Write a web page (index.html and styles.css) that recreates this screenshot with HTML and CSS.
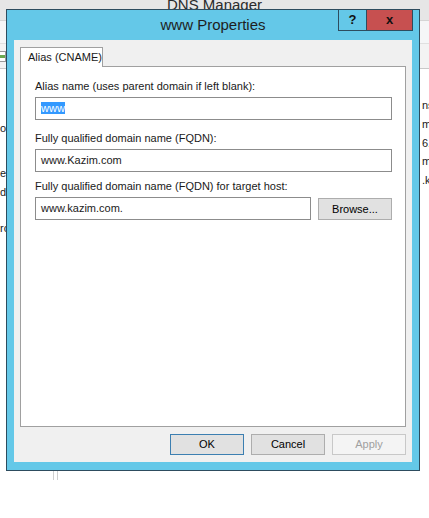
FILE: index.html
```html
<!DOCTYPE html>
<html>
<head>
  <title>www Properties</title>
  <link rel="stylesheet" href="styles.css">
</head>
<body>
<div class="desktop">
  <div class="app">
    <div class="app-title">DNS Manager</div>
    <div class="app-menu"></div>
    <div class="app-tools"><span class="tool-icon"></span></div>
    <div class="app-body">
      <ul class="tree">
        <li class="row-a">ord</li>
        <li class="row-b">er</li>
        <li class="row-c">d</li>
        <li class="row-d">rc</li>
      </ul>
      <ul class="records">
        <li>ns1.kazim.com.</li>
        <li>mail.kazim.com.</li>
        <li>6.0.0.1</li>
        <li>mail.kazim.com.</li>
        <li>.kazim.com.</li>
      </ul>
    </div>
  </div>

  <div class="dialog">
    <div class="dialog-title">www Properties</div>
    <div class="caption-buttons">
      <span class="cap-btn cap-help">?</span>
      <span class="cap-btn cap-close">x</span>
    </div>
    <div class="dialog-client">
      <div class="tabs">
        <span class="tab">Alias (CNAME)</span>
      </div>
      <div class="tab-panel">
        <div class="field">
          <label>Alias name (uses parent domain if left blank):</label>
          <div class="textbox"><span class="selected">www</span></div>
        </div>
        <div class="field">
          <label>Fully qualified domain name (FQDN):</label>
          <div class="textbox">www.Kazim.com</div>
        </div>
        <div class="field field-target">
          <label>Fully qualified domain name (FQDN) for target host:</label>
          <div class="field-row">
            <div class="textbox">www.kazim.com.</div>
            <span class="btn btn-browse">Browse...</span>
          </div>
        </div>
      </div>
      <div class="dialog-buttons">
        <span class="btn btn-default">OK</span>
        <span class="btn">Cancel</span>
        <span class="btn btn-disabled">Apply</span>
      </div>
    </div>
  </div>
</div>
</body>
</html>
```

FILE: styles.css
```css
body {
  margin: 0;
  background: #ffffff;
  font-family: "Liberation Sans", Arial, sans-serif;
  font-size: 11px;
  color: #1a1a1a;
}
ul {
  list-style: none;
  margin: 0;
  padding: 0;
}
.desktop {
  position: relative;
  width: 429px;
  height: 518px;
  overflow: hidden;
}

/* window behind the dialog */
.app-title {
  height: 20px;
  background: #e6e6e6;
  text-align: center;
  font-size: 15px;
  line-height: 10px;
  color: #2b2b2b;
  overflow: hidden;
}
.app-menu {
  height: 22px;
  background: #f5f6f7;
  border-top: 1px solid #d5d5d5;
}
.app-tools {
  height: 24px;
  background: #f3f3f3;
  border-top: 1px solid #e0e0e0;
  border-bottom: 1px solid #c9c9c9;
  display: flex;
  align-items: center;
}
.tool-icon {
  width: 5px;
  height: 9px;
  border: 1px solid #9a9a9a;
  border-left: 0;
  background: linear-gradient(#ffffff 0 3px, #6aa84f 3px 6px, #ffffff 6px);
}
.app-body {
  height: 411px;
  display: flex;
}
.tree {
  width: 53px;
  border-right: 1px solid #cfcfcf;
  white-space: nowrap;
  overflow: hidden;
}
.tree li {
  line-height: 18px;
}
.tree .row-a { margin-top: 50px; }
.tree .row-b { margin-top: 27px; }
.tree .row-c { margin-top: 1px; }
.tree .row-d { margin-top: 18px; }
.records {
  flex: 1;
  margin-left: 3px;
  border-left: 1px solid #cfcfcf;
  padding: 27px 0 0 364px;
  white-space: nowrap;
  overflow: hidden;
}
.records li {
  line-height: 18.75px;
}

/* the properties dialog */
.dialog {
  position: absolute;
  left: 6px;
  top: 9px;
  width: 398px;
  height: 452px;
  padding: 0 7px 8px;
  border: 1px solid #2d4c5e;
  background: #64c8e8;
  display: flex;
  flex-direction: column;
}
.dialog-title {
  height: 30px;
  line-height: 30px;
  text-align: center;
  font-size: 15px;
  color: #1e1e1e;
}
.caption-buttons {
  position: absolute;
  top: -1px;
  right: 6px;
  display: flex;
}
.cap-btn {
  height: 20px;
  line-height: 20px;
  border: 1px solid #2d4c5e;
  text-align: center;
  font-weight: bold;
  font-size: 13px;
  color: #111;
}
.cap-help {
  width: 27px;
  background: #64c8e8;
}
.cap-close {
  width: 45px;
  margin-left: -1px;
  background: #c75050;
}
.dialog-client {
  flex: 1;
  background: #f0f0f0;
  padding: 7px 6px 7px;
  display: flex;
  flex-direction: column;
}
.tabs {
  display: flex;
  height: 20px;
}
.tab {
  width: 83px;
  box-sizing: border-box;
  padding: 0 7px;
  border: 1px solid #a0a0a0;
  border-bottom: 0;
  background: #ffffff;
  line-height: 19px;
  white-space: nowrap;
  position: relative;
  z-index: 1;
}
.tab-panel {
  flex: 1;
  margin-top: -1px;
  border: 1px solid #a0a0a0;
  background: #ffffff;
  padding: 12px 13px 0 14px;
}
.field label {
  display: block;
  line-height: 15px;
  margin-bottom: 3px;
}
.field + .field {
  margin-top: 11px;
}
.field + .field-target {
  margin-top: 7px;
}
.textbox {
  height: 21px;
  line-height: 21px;
  padding: 0 5px;
  border: 1px solid #8c8c8c;
  background: #ffffff;
  white-space: nowrap;
  overflow: hidden;
}
.selected {
  background: #3399ff;
  color: #ffffff;
}
.field-row {
  display: flex;
  align-items: center;
  gap: 7px;
}
.field-row .textbox {
  flex: 1;
}
.btn {
  box-sizing: border-box;
  width: 74px;
  height: 21px;
  line-height: 19px;
  text-align: center;
  border: 1px solid #adadad;
  background: #e1e1e1;
  color: #000;
}
.btn-browse {
  height: 22px;
  line-height: 20px;
}
.btn-default {
  border-color: #3c7fb1;
}
.btn-disabled {
  background: #f4f4f4;
  border-color: #c8c8c8;
  color: #a0a0a0;
}
.dialog-buttons {
  margin-top: 7px;
  display: flex;
  justify-content: flex-end;
  gap: 7px;
}
```
